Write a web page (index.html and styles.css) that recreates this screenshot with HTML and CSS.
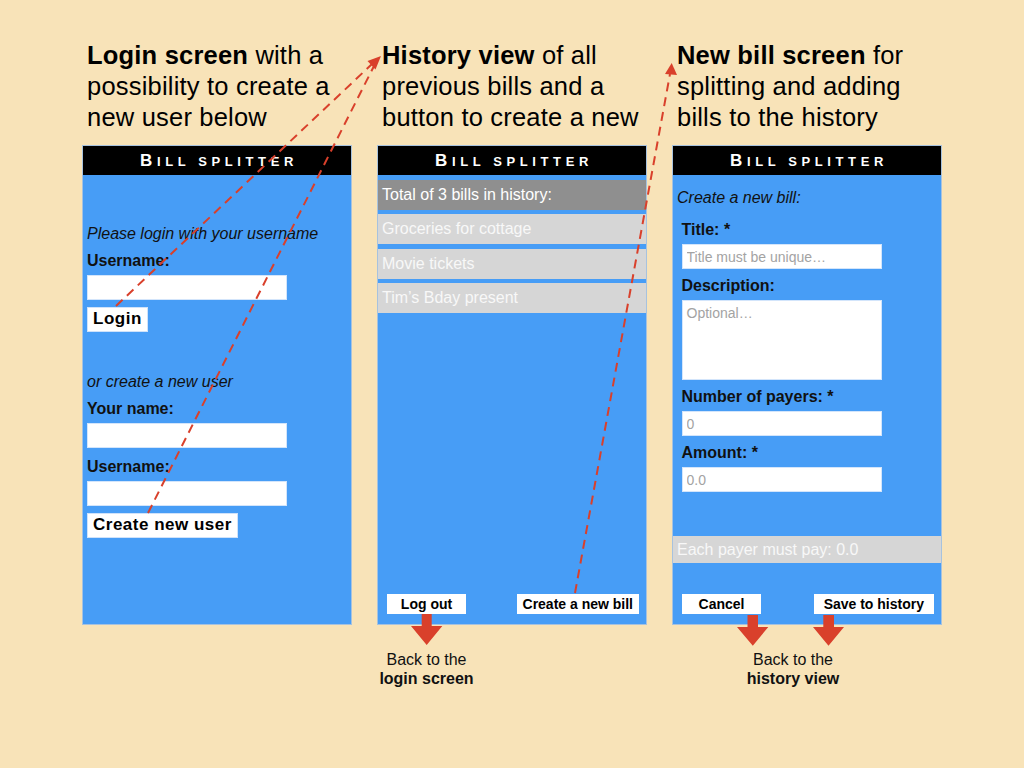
FILE: index.html
```html
<!DOCTYPE html>
<html lang="en">
<head>
    <meta charset="UTF-8">
    <meta name="viewport" content="width=device-width, initial-scale=1.0">
    <title>Bill splitter - screens</title>
    <link rel="stylesheet" href="styles.css">
</head>
<body>
<div class="page">
    <section class="column">
        <p class="intro"><b>Login screen</b> with a<br>possibility to create a<br>new user below</p>
        <div class="panel">
            <div class="panel-title">Bill splitter</div>
            <div class="panel-body login-body">
                <p class="hint">Please login with your username</p>
                <label class="field-label">Username:</label>
                <input class="field" type="text">
                <button class="btn-big">Login</button>

                <p class="hint hint-gap">or create a new user</p>
                <label class="field-label">Your name:</label>
                <input class="field" type="text">
                <label class="field-label field-label-next">Username:</label>
                <input class="field" type="text">
                <button class="btn-big">Create new user</button>
            </div>
        </div>
    </section>

    <section class="column">
        <p class="intro"><b>History view</b> of all<br>previous bills and a<br>button to create a new</p>
        <div class="panel">
            <div class="panel-title">Bill splitter</div>
            <div class="panel-body history-body">
                <div class="total-row">Total of 3 bills in history:</div>
                <div class="bill-row">Groceries for cottage</div>
                <div class="bill-row">Movie tickets</div>
                <div class="bill-row">Tim’s Bday present</div>
                <div class="panel-footer">
                    <button class="btn-small">Log out</button>
                    <button class="btn-small">Create a new bill</button>
                </div>
            </div>
        </div>
        <p class="caption caption-history">Back to the<br><b>login screen</b></p>
    </section>

    <section class="column">
        <p class="intro"><b>New bill screen</b> for<br>splitting and adding<br>bills to the history</p>
        <div class="panel">
            <div class="panel-title">Bill splitter</div>
            <div class="panel-body bill-body">
                <p class="hint bill-hint">Create a new bill:</p>
                <div class="bill-form">
                    <label class="field-label field-label-first">Title: *</label>
                    <input class="field" type="text" placeholder="Title must be unique…">
                    <label class="field-label">Description:</label>
                    <textarea class="field field-area" placeholder="Optional…"></textarea>
                    <label class="field-label">Number of payers: *</label>
                    <input class="field" type="text" placeholder="0">
                    <label class="field-label">Amount: *</label>
                    <input class="field" type="text" placeholder="0.0">
                </div>
                <div class="pay-row">Each payer must pay: 0.0</div>
                <div class="panel-footer">
                    <button class="btn-small">Cancel</button>
                    <button class="btn-small btn-roomy">Save to history</button>
                </div>
            </div>
        </div>
        <p class="caption caption-bill">Back to the<br><b>history view</b></p>
    </section>

    <svg class="annotations" width="1024" height="768" viewBox="0 0 1024 768">
        <g class="dashes">
            <line x1="116" y1="306" x2="372" y2="64"/>
            <line x1="148" y1="513" x2="374" y2="66"/>
            <line x1="575" y1="593" x2="670" y2="74"/>
        </g>
        <g class="heads">
            <polygon points="381,56 367.5,61 375.5,69.5"/>
            <polygon points="671.7,63 665,74 677,75"/>
            <polygon points="421.7,614 431.7,614 431.7,626 442.3,626 426.7,645 411,626 421.7,626"/>
            <polygon points="747.5,615 758,615 758,627 768.3,627 752.8,645.7 737,627 747.5,627"/>
            <polygon points="823.3,615 834,615 834,627 844,627 828.5,645.7 813,627 823.3,627"/>
        </g>
    </svg>
</div>
</body>
</html>
```

FILE: styles.css
```css
* {
    box-sizing: border-box;
}
body {
    margin: 0;
    background-color: #f8e3b8;
    font-family: "Liberation Sans", Arial, sans-serif;
    color: #111;
}
.page {
    position: relative;
    width: 1024px;
    height: 768px;
    display: flex;
    gap: 25px;
    padding-top: 40px;
    padding-left: 82px;
}
.column {
    width: 270px;
    flex: none;
}
.intro {
    margin: 0 0 11.5px 0;
    padding-left: 5px;
    height: 93px;
    font-size: 25.5px;
    line-height: 31px;
    letter-spacing: 0.2px;
    white-space: nowrap;
    color: #000;
}

/* phone mockup */
.panel {
    width: 270px;
    height: 480px;
    display: flex;
    flex-direction: column;
    background-color: #479df6;
    border: 1px solid #a7c2de;
}
.panel-title {
    height: 29px;
    flex: none;
    background-color: #000;
    color: #fff;
    text-align: center;
    font-weight: bold;
    text-transform: uppercase;
    font-size: 13px;
    line-height: 29px;
    letter-spacing: 4.6px;
    padding-left: 4px;
}
.panel-title::first-letter {
    font-size: 17px;
}
.panel-body {
    flex: 1;
    display: flex;
    flex-direction: column;
    align-items: flex-start;
}
.hint {
    margin: 0;
    font-style: italic;
    font-size: 16px;
    line-height: 19px;
}
.field-label {
    display: block;
    font-weight: bold;
    font-size: 16px;
    line-height: 19px;
    margin-top: 8px;
    margin-bottom: 5px;
}
.field {
    width: 200px;
    height: 25px;
    margin: 0;
    padding: 0 4px;
    border: 1px solid #d3e5fb;
    background-color: #fff;
    font-family: "Liberation Sans", Arial, sans-serif;
    font-size: 14px;
    color: #333;
}
.field::placeholder { color: #a3a3a3; }
.field-area {
    height: 80px;
    padding-top: 3px;
    resize: none;
    line-height: 18px;
}
.btn-big {
    height: 25px;
    margin-top: 7px;
    padding: 0 5px;
    border: 1px solid #cfe2fa;
    background-color: #fff;
    color: #000;
    font-family: "Liberation Sans", Arial, sans-serif;
    font-weight: bold;
    font-size: 17px;
    letter-spacing: 0.5px;
}

/* login */
.login-body { padding: 49px 0 0 4px; }
.hint-gap { margin-top: 40px; }
.field-label-next { margin-top: 9px; }

/* history */
.history-body { padding-top: 5px; }
.total-row, .bill-row, .pay-row {
    width: 100%;
    padding-left: 4px;
    color: #fff;
    font-size: 16px;
}
.total-row {
    height: 30px;
    line-height: 30px;
    background-color: #8f8f8f;
}
.bill-row {
    height: 30px;
    line-height: 30px;
    margin-top: 4.5px;
    background-color: #d6d6d6;
    color: #f8f8f8;
}
.panel-footer {
    margin-top: auto;
    width: 100%;
    display: flex;
    justify-content: space-between;
    padding: 0 7px 10px 9px;
}
.btn-small {
    height: 20px;
    min-width: 79px;
    padding: 0 6px;
    border: none;
    background-color: #fff;
    color: #000;
    font-family: "Liberation Sans", Arial, sans-serif;
    font-weight: bold;
    font-size: 14px;
}
.btn-roomy { padding: 0 10px; }

/* new bill */
.bill-body { padding-top: 13.5px; }
.bill-hint { margin-left: 4px; }
.bill-form {
    display: flex;
    flex-direction: column;
    align-items: flex-start;
    padding-left: 8.5px;
}
.bill-form .field-label { margin-top: 7px; }
.bill-form .field-label-first { margin-top: 13px; }
.pay-row {
    margin-top: 43.5px;
    height: 27px;
    line-height: 27px;
    background-color: #d6d6d6;
    color: #f8f8f8;
}

.caption {
    margin: 25px 0 0 0;
    text-align: center;
    font-size: 16px;
    line-height: 19px;
    color: #111;
    white-space: nowrap;
}
.caption-history { width: 99px; }
.caption-bill { width: 100px; margin-left: 71px; }

/* red arrows drawn over the mockups */
.annotations {
    position: absolute;
    left: 0;
    top: 0;
    pointer-events: none;
}
.dashes line {
    stroke: #d9402b;
    stroke-width: 2;
    stroke-dasharray: 9 6;
}
.heads polygon { fill: #d9402b; }
```
